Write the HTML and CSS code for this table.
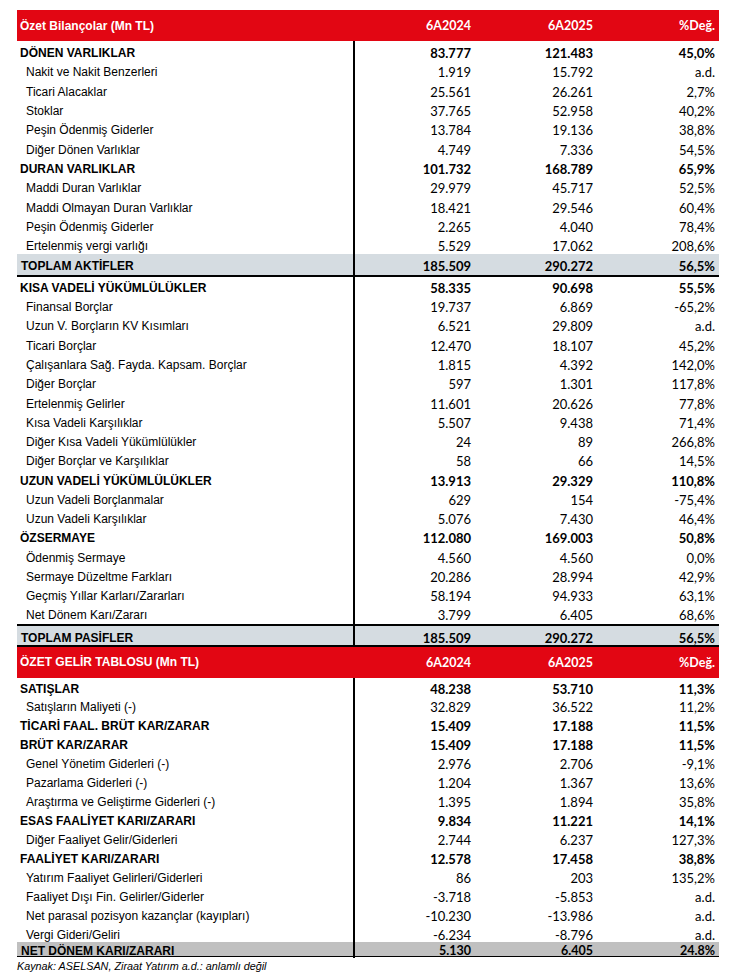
FILE: index.html
```html
<!DOCTYPE html>
<html lang="tr">
<head>
<meta charset="utf-8">
<link rel="stylesheet" href="styles.css">
</head>
<body>
<div class="sheet">
  <div class="row head"><div class="lbl">Özet Bilançolar (Mn TL)</div><div class="num">6A2024</div><div class="num">6A2025</div><div class="num">%Değ.</div></div>
  <div class="sec s1">
    <div class="row b"><div class="lbl">DÖNEN VARLIKLAR</div><div class="num">83.777</div><div class="num">121.483</div><div class="num">45,0%</div></div>
    <div class="row"><div class="lbl">Nakit ve Nakit Benzerleri</div><div class="num">1.919</div><div class="num">15.792</div><div class="num">a.d.</div></div>
    <div class="row"><div class="lbl">Ticari Alacaklar</div><div class="num">25.561</div><div class="num">26.261</div><div class="num">2,7%</div></div>
    <div class="row"><div class="lbl">Stoklar</div><div class="num">37.765</div><div class="num">52.958</div><div class="num">40,2%</div></div>
    <div class="row"><div class="lbl">Peşin Ödenmiş Giderler</div><div class="num">13.784</div><div class="num">19.136</div><div class="num">38,8%</div></div>
    <div class="row"><div class="lbl">Diğer Dönen Varlıklar</div><div class="num">4.749</div><div class="num">7.336</div><div class="num">54,5%</div></div>
    <div class="row b"><div class="lbl">DURAN VARLIKLAR</div><div class="num">101.732</div><div class="num">168.789</div><div class="num">65,9%</div></div>
    <div class="row"><div class="lbl">Maddi Duran Varlıklar</div><div class="num">29.979</div><div class="num">45.717</div><div class="num">52,5%</div></div>
    <div class="row"><div class="lbl">Maddi Olmayan Duran Varlıklar</div><div class="num">18.421</div><div class="num">29.546</div><div class="num">60,4%</div></div>
    <div class="row"><div class="lbl">Peşin Ödenmiş Giderler</div><div class="num">2.265</div><div class="num">4.040</div><div class="num">78,4%</div></div>
    <div class="row"><div class="lbl">Ertelenmiş vergi varlığı</div><div class="num">5.529</div><div class="num">17.062</div><div class="num">208,6%</div></div>
  </div>
  <div class="row b total t1"><div class="lbl">TOPLAM AKTİFLER</div><div class="num">185.509</div><div class="num">290.272</div><div class="num">56,5%</div></div>
  <div class="sec s2">
    <div class="row b"><div class="lbl">KISA VADELİ YÜKÜMLÜLÜKLER</div><div class="num">58.335</div><div class="num">90.698</div><div class="num">55,5%</div></div>
    <div class="row"><div class="lbl">Finansal Borçlar</div><div class="num">19.737</div><div class="num">6.869</div><div class="num">-65,2%</div></div>
    <div class="row"><div class="lbl">Uzun V. Borçların KV Kısımları</div><div class="num">6.521</div><div class="num">29.809</div><div class="num">a.d.</div></div>
    <div class="row"><div class="lbl">Ticari Borçlar</div><div class="num">12.470</div><div class="num">18.107</div><div class="num">45,2%</div></div>
    <div class="row"><div class="lbl">Çalışanlara Sağ. Fayda. Kapsam. Borçlar</div><div class="num">1.815</div><div class="num">4.392</div><div class="num">142,0%</div></div>
    <div class="row"><div class="lbl">Diğer Borçlar</div><div class="num">597</div><div class="num">1.301</div><div class="num">117,8%</div></div>
    <div class="row"><div class="lbl">Ertelenmiş Gelirler</div><div class="num">11.601</div><div class="num">20.626</div><div class="num">77,8%</div></div>
    <div class="row"><div class="lbl">Kısa Vadeli Karşılıklar</div><div class="num">5.507</div><div class="num">9.438</div><div class="num">71,4%</div></div>
    <div class="row"><div class="lbl">Diğer Kısa Vadeli Yükümlülükler</div><div class="num">24</div><div class="num">89</div><div class="num">266,8%</div></div>
    <div class="row"><div class="lbl">Diğer Borçlar ve Karşılıklar</div><div class="num">58</div><div class="num">66</div><div class="num">14,5%</div></div>
    <div class="row b"><div class="lbl">UZUN VADELİ YÜKÜMLÜLÜKLER</div><div class="num">13.913</div><div class="num">29.329</div><div class="num">110,8%</div></div>
    <div class="row"><div class="lbl">Uzun Vadeli Borçlanmalar</div><div class="num">629</div><div class="num">154</div><div class="num">-75,4%</div></div>
    <div class="row"><div class="lbl">Uzun Vadeli Karşılıklar</div><div class="num">5.076</div><div class="num">7.430</div><div class="num">46,4%</div></div>
    <div class="row b"><div class="lbl">ÖZSERMAYE</div><div class="num">112.080</div><div class="num">169.003</div><div class="num">50,8%</div></div>
    <div class="row"><div class="lbl">Ödenmiş Sermaye</div><div class="num">4.560</div><div class="num">4.560</div><div class="num">0,0%</div></div>
    <div class="row"><div class="lbl">Sermaye Düzeltme Farkları</div><div class="num">20.286</div><div class="num">28.994</div><div class="num">42,9%</div></div>
    <div class="row"><div class="lbl">Geçmiş Yıllar Karları/Zararları</div><div class="num">58.194</div><div class="num">94.933</div><div class="num">63,1%</div></div>
    <div class="row"><div class="lbl">Net Dönem Karı/Zararı</div><div class="num">3.799</div><div class="num">6.405</div><div class="num">68,6%</div></div>
  </div>
  <div class="row b total t2"><div class="lbl">TOPLAM PASİFLER</div><div class="num">185.509</div><div class="num">290.272</div><div class="num">56,5%</div></div>
  <div class="row head"><div class="lbl">ÖZET GELİR TABLOSU (Mn TL)</div><div class="num">6A2024</div><div class="num">6A2025</div><div class="num">%Değ.</div></div>
  <div class="sec s3">
    <div class="row b"><div class="lbl">SATIŞLAR</div><div class="num">48.238</div><div class="num">53.710</div><div class="num">11,3%</div></div>
    <div class="row"><div class="lbl">Satışların Maliyeti (-)</div><div class="num">32.829</div><div class="num">36.522</div><div class="num">11,2%</div></div>
    <div class="row b"><div class="lbl">TİCARİ FAAL. BRÜT KAR/ZARAR</div><div class="num">15.409</div><div class="num">17.188</div><div class="num">11,5%</div></div>
    <div class="row b"><div class="lbl">BRÜT KAR/ZARAR</div><div class="num">15.409</div><div class="num">17.188</div><div class="num">11,5%</div></div>
    <div class="row"><div class="lbl">Genel Yönetim Giderleri (-)</div><div class="num">2.976</div><div class="num">2.706</div><div class="num">-9,1%</div></div>
    <div class="row"><div class="lbl">Pazarlama Giderleri (-)</div><div class="num">1.204</div><div class="num">1.367</div><div class="num">13,6%</div></div>
    <div class="row"><div class="lbl">Araştırma ve Geliştirme Giderleri (-)</div><div class="num">1.395</div><div class="num">1.894</div><div class="num">35,8%</div></div>
    <div class="row b"><div class="lbl">ESAS FAALİYET KARI/ZARARI</div><div class="num">9.834</div><div class="num">11.221</div><div class="num">14,1%</div></div>
    <div class="row"><div class="lbl">Diğer Faaliyet Gelir/Giderleri</div><div class="num">2.744</div><div class="num">6.237</div><div class="num">127,3%</div></div>
    <div class="row b"><div class="lbl">FAALİYET KARI/ZARARI</div><div class="num">12.578</div><div class="num">17.458</div><div class="num">38,8%</div></div>
    <div class="row"><div class="lbl">Yatırım Faaliyet Gelirleri/Giderleri</div><div class="num">86</div><div class="num">203</div><div class="num">135,2%</div></div>
    <div class="row"><div class="lbl">Faaliyet Dışı Fin. Gelirler/Giderler</div><div class="num">-3.718</div><div class="num">-5.853</div><div class="num">a.d.</div></div>
    <div class="row"><div class="lbl">Net parasal pozisyon kazançlar (kayıpları)</div><div class="num">-10.230</div><div class="num">-13.986</div><div class="num">a.d.</div></div>
    <div class="row"><div class="lbl">Vergi Gideri/Geliri</div><div class="num">-6.234</div><div class="num">-8.796</div><div class="num">a.d.</div></div>
  </div>
  <div class="row b net"><div class="lbl">NET DÖNEM KARI/ZARARI</div><div class="num">5.130</div><div class="num">6.405</div><div class="num">24.8%</div></div>
  <p class="source">Kaynak: ASELSAN, Ziraat Yatırım a.d.: anlamlı değil</p>
</div>
</body>
</html>
```

FILE: styles.css
```css
html, body {
  margin: 0;
  padding: 0;
  background: #fff;
}

.sheet {
  width: 702px;
  margin-left: 17px;
  padding-top: 10px;
  font-family: "Liberation Sans", Arial, sans-serif;
  color: #000;
}

.row {
  display: grid;
  grid-template-columns: 338px 120px 122px 122px;
  align-items: center;
  height: 19.35px;
  --shift: 3px;
}

.lbl {
  font-size: 12px;
  padding-left: 9px;
  padding-top: var(--shift);
  height: 100%;
  display: flex;
  align-items: center;
  border-right: 2px solid #000;
  box-sizing: border-box;
  white-space: nowrap;
}

.num {
  font-family: Lato, "Open Sans", sans-serif;
  font-size: 13px;
  text-align: right;
  padding-right: 4px;
  padding-top: var(--shift);
}

.b .lbl {
  font-weight: 700;
  padding-left: 3px;
}

.b .num {
  font-weight: 700;
}

.s1 .row { --shift: 4px; }
.s2 .row { height: 19.28px; }
.s3 .row { height: 18.93px; }

.head {
  height: 31px;
  background: #e20613;
  color: #fff;
  --shift: 0px;
}

.head .lbl {
  font-weight: 700;
  padding-left: 3px;
  border-right: none;
}

.head .num {
  font-weight: 700;
  font-size: 12.5px;
}

.total {
  background: #d5dce1;
  height: 21px;
  box-sizing: content-box;
  border-bottom: 2px solid #000;
  --shift: 4px;
}

.total .lbl {
  padding-left: 4px;
}

.t2 {
  height: 19px;
  border-top: 2px solid #000;
}

.net {
  background: #c0c0c0;
  height: 14px;
  box-sizing: content-box;
  border-bottom: 1px solid #000;
  --shift: 2px;
}

.net .lbl {
  padding-left: 4px;
}

.net .num {
  font-size: 12.5px;
  line-height: 14px;
}

.source {
  margin: 2px 0 0 0;
  font-size: 10.8px;
  font-style: italic;
  line-height: 14px;
}
```
